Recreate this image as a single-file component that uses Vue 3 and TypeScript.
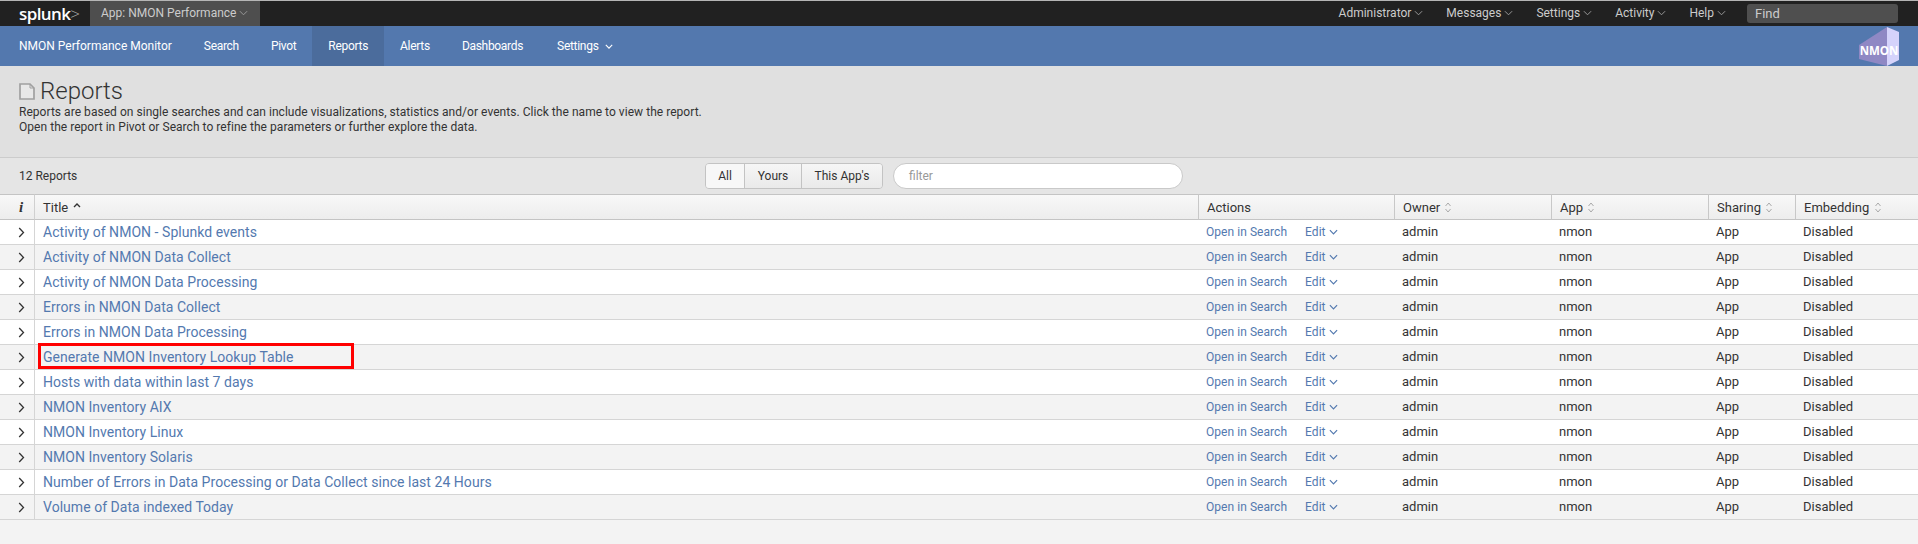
<script setup lang="ts">
interface Report {
  title: string
  marked?: boolean
}

const reports: Report[] = [
  { title: 'Activity of NMON - Splunkd events' },
  { title: 'Activity of NMON Data Collect' },
  { title: 'Activity of NMON Data Processing' },
  { title: 'Errors in NMON Data Collect' },
  { title: 'Errors in NMON Data Processing' },
  { title: 'Generate NMON Inventory Lookup Table', marked: true },
  { title: 'Hosts with data within last 7 days' },
  { title: 'NMON Inventory AIX' },
  { title: 'NMON Inventory Linux' },
  { title: 'NMON Inventory Solaris' },
  { title: 'Number of Errors in Data Processing or Data Collect since last 24 Hours' },
  { title: 'Volume of Data indexed Today' },
]

const userMenus = ['Administrator', 'Messages', 'Settings', 'Activity', 'Help']
const navItems = ['Search', 'Pivot', 'Reports', 'Alerts', 'Dashboards']
const sortable = [
  { label: 'Owner', width: 157 },
  { label: 'App', width: 157 },
  { label: 'Sharing', width: 87 },
  { label: 'Embedding', width: 123 },
]
</script>

<template>
  <div class="page">
    <header class="topbar">
      <div class="brand"><b>splunk</b><span>&gt;</span></div>
      <div class="app-menu">
        App: NMON Performance
        <svg class="caret" viewBox="0 0 10 6"><path d="M1 1l4 4 4-4" /></svg>
      </div>
      <div class="user-menus">
        <span v-for="m in userMenus" :key="m" class="user-menu">
          {{ m }}
          <svg class="caret" viewBox="0 0 10 6"><path d="M1 1l4 4 4-4" /></svg>
        </span>
      </div>
      <div class="find">Find</div>
    </header>

    <nav class="appbar">
      <span class="nav-item home">NMON Performance Monitor</span>
      <span v-for="n in navItems" :key="n" class="nav-item" :class="{ active: n === 'Reports' }">{{ n }}</span>
      <span class="nav-item settings">
        Settings
        <svg class="caret" viewBox="0 0 10 6"><path d="M1 1l4 4 4-4" /></svg>
      </span>
      <svg class="logo" viewBox="0 0 40 40">
        <polygon points="0,19 28,1 28,40 0,33" fill="#8f88c4" />
        <polygon points="28,1 40,6 40,34 28,40" fill="#d5d3fb" />
        <text x="20" y="29" text-anchor="middle">NMON</text>
      </svg>
    </nav>

    <section class="intro">
      <h1>
        <svg class="doc" viewBox="0 0 16 17">
          <path d="M1 1h10l4 4v11H1z" fill="#e8e8e8" stroke="#a0a0a0" stroke-width="1.7" />
          <path d="M11 1v4h4" fill="none" stroke="#a0a0a0" />
        </svg>
        Reports
      </h1>
      <p>Reports are based on single searches and can include visualizations, statistics and/or events. Click the name to view the report.</p>
      <p>Open the report in Pivot or Search to refine the parameters or further explore the data.</p>
    </section>

    <section class="controls">
      <span class="count">12 Reports</span>
      <div class="toggle">
        <span class="on">All</span>
        <span class="yours">Yours</span>
        <span class="this-app">This App's</span>
      </div>
      <div class="filter">filter</div>
    </section>

    <table class="reports">
      <colgroup>
        <col style="width: 35px" />
        <col />
        <col style="width: 196px" />
        <col v-for="c in sortable" :key="c.label" :style="{ width: c.width + 'px' }" />
      </colgroup>
      <thead>
        <tr>
          <th class="info">i</th>
          <th class="title-head">
            Title
            <svg class="sort-up" viewBox="0 0 8 5"><path d="M1 4l3-3 3 3" /></svg>
          </th>
          <th>Actions</th>
          <th v-for="c in sortable" :key="c.label">
            {{ c.label }}
            <svg class="sort" viewBox="0 0 8 13"><path d="M1.5 5l2.5-3 2.5 3M1.5 8l2.5 3 2.5-3" /></svg>
          </th>
        </tr>
      </thead>
      <tbody>
        <tr v-for="r in reports" :key="r.title">
          <td class="expand">
            <svg viewBox="0 0 7 11"><path d="M1.2 1l4.3 4.5-4.3 4.5" /></svg>
          </td>
          <td class="title-cell">
            <a>{{ r.title }}</a>
            <span v-if="r.marked" class="marker"></span>
          </td>
          <td class="actions">
            <a>Open in Search</a>
            <a class="edit">
              Edit
              <svg class="caret" viewBox="0 0 10 6"><path d="M1 1l4 4 4-4" /></svg>
            </a>
          </td>
          <td class="plain">admin</td>
          <td class="plain">nmon</td>
          <td class="plain">App</td>
          <td class="plain">Disabled</td>
        </tr>
      </tbody>
    </table>
  </div>
</template>

<style>
html, body {
  margin: 0;
  background: #f3f3f3;
}
</style>

<style scoped>
.page {
  height: 544px;
  overflow: hidden;
  background: #f3f3f3;
  font-family: Roboto, "Liberation Sans", sans-serif;
  font-size: 12px;
  color: #333;
}

.caret {
  width: 9px;
  height: 6px;
  vertical-align: 1px;
  fill: none;
  stroke: #999;
  stroke-width: 1.1;
}

.topbar {
  display: flex;
  align-items: stretch;
  height: 25px;
  border-top: 1px solid #b5b5b5;
  background: #212121;
  color: #ccc;
}

.brand {
  width: 90px;
  box-sizing: border-box;
  padding: 2px 0 0 19px;
  font-family: "Open Sans", sans-serif;
  font-size: 17px;
  line-height: 21px;
  letter-spacing: -0.6px;
  color: #fff;
}
.brand b { font-weight: 600; }
.brand span { color: #aaa; font-weight: 300; }

.app-menu {
  width: 170px;
  box-sizing: border-box;
  padding-left: 11px;
  line-height: 24px;
  white-space: nowrap;
  background: #4e4e4e;
}

.user-menus {
  display: flex;
  margin-left: auto;
  line-height: 24px;
}
.user-menu { margin-left: 23px; }

.find {
  width: 151px;
  height: 19px;
  margin: 3px 20px 0 21px;
  box-sizing: border-box;
  padding-left: 8px;
  border-radius: 3px;
  background: #4f4f4f;
  font-size: 13px;
  line-height: 20px;
}

.appbar {
  display: flex;
  align-items: stretch;
  position: relative;
  height: 40px;
  padding-left: 3px;
  background: #5378ae;
  color: #fff;
  line-height: 40px;
}
.nav-item {
  padding: 0 16px;
  letter-spacing: -0.3px;
}
.nav-item.home { letter-spacing: 0; }
.nav-item.settings { margin-left: 2px; }
.nav-item.active { background: #4b6c9c; }
.nav-item .caret {
  width: 8px;
  height: 5px;
  margin-left: 4px;
  stroke: #fff;
  stroke-width: 1.4;
}

.logo {
  position: absolute;
  right: 19px;
  top: 0;
  width: 40px;
  height: 40px;
}
.logo text {
  font-family: "Open Sans", sans-serif;
  font-size: 11.5px;
  font-weight: 700;
  fill: #fff;
}

.intro {
  height: 91px;
  box-sizing: border-box;
  padding: 11px 19px 0;
  background: #e0e0e0;
}
.intro h1 {
  display: flex;
  align-items: center;
  gap: 5px;
  margin: 0;
  font-size: 24px;
  font-weight: 300;
  line-height: 28px;
}
.doc { width: 16px; height: 17px; }
.intro p {
  margin: 0;
  line-height: 15px;
  letter-spacing: 0.04px;
}

.controls {
  display: flex;
  align-items: center;
  height: 37px;
  box-sizing: border-box;
  border-top: 1px solid #ccc;
  background: #e5e5e5;
  padding-left: 19px;
}
.count { width: 686px; }

.toggle {
  display: flex;
  height: 26px;
  box-sizing: border-box;
  border: 1px solid #c3c3c3;
  border-radius: 4px;
  overflow: hidden;
  line-height: 24px;
}
.toggle span {
  width: 38px;
  text-align: center;
  border-left: 1px solid #c3c3c3;
  background: linear-gradient(#f6f6f6, #eaeaea);
}
.toggle .on { border-left: 0; background: #f7f7f7; }
.toggle .yours { width: 56px; }
.toggle .this-app { width: 80px; }

.filter {
  width: 290px;
  height: 26px;
  margin-left: 10px;
  box-sizing: border-box;
  padding-left: 15px;
  border: 1px solid #c9c9c9;
  border-radius: 13px;
  background: #fff;
  color: #999;
  line-height: 24px;
}

.reports {
  width: 100%;
  table-layout: fixed;
  border-collapse: separate;
  border-spacing: 0;
  font-size: 13px;
}
.reports th {
  height: 26px;
  box-sizing: border-box;
  padding: 0 8px;
  border-top: 1px solid #c4c4c4;
  border-bottom: 1px solid #c4c4c4;
  border-left: 1px solid #c8c8c8;
  background: linear-gradient(#f8f8f8, #ededed);
  text-align: left;
  font-weight: 400;
}
.reports th.title-head { border-left: 0; }
.reports th.info {
  padding: 0 0 0 8px;
  border-left: 0;
  border-right: 1px solid #d0d0d0;
  text-align: center;
  font-family: "Liberation Serif", serif;
  font-size: 15px;
  font-style: italic;
  font-weight: 700;
}
.reports td {
  height: 25px;
  box-sizing: border-box;
  padding: 0 8px;
  border-bottom: 1px solid #d5d5d5;
  background: #fff;
}
.reports td.plain { padding-bottom: 2px; }
.reports tbody tr:nth-child(even) td { background: #f3f3f3; }
.reports a { color: #5379af; }

.reports .expand {
  padding: 0 0 0 8px;
  text-align: center;
  border-right: 1px solid #d5d5d5;
}
.expand svg {
  width: 7px;
  height: 11px;
  vertical-align: -1px;
  fill: none;
  stroke: #333;
  stroke-width: 1.3;
}

.sort-up, .sort {
  fill: none;
  stroke: #333;
}
.sort-up { width: 8px; height: 5px; margin-left: 2px; vertical-align: 4px; stroke-width: 1.4; }
.sort { width: 8px; height: 13px; margin-left: 1px; vertical-align: -2px; stroke: #aaa; }

.title-cell {
  position: relative;
  font-size: 14px;
  letter-spacing: 0.04px;
}
.marker {
  position: absolute;
  left: 3px;
  top: -2px;
  width: 316px;
  height: 26px;
  box-sizing: border-box;
  border: 3px solid #f00;
}

.actions { font-size: 12px; letter-spacing: 0.05px; }
.edit { margin-left: 15px; }
.edit .caret {
  width: 9px;
  height: 6px;
  stroke: #5379af;
  stroke-width: 1.3;
}
</style>
